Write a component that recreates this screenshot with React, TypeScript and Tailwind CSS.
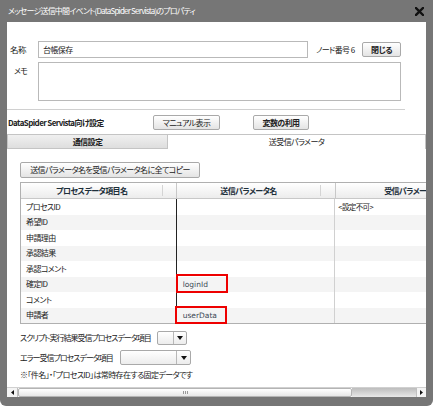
import React from "react";

function Btn({ w, children, bold }: { w: string; children: React.ReactNode; bold?: boolean }) {
  return (
    <div
      className={`${w} h-[15px] flex items-center justify-center rounded-[2px] border border-[#a9a9a9] bg-linear-to-b from-white to-[#e4e4e4] text-[#222] ${bold ? "font-bold" : ""}`}
    >
      {children}
    </div>
  );
}

function Select({ w, left }: { w: string; left: string }) {
  return (
    <div className={`${w} h-full flex rounded-[2px] border border-[#a9a9a9] bg-linear-to-b from-white to-[#ececec]`}>
      <div className={`${left} h-full border-r border-[#b8b8b8]`} />
      <div className="flex-1 flex items-center justify-center">
        <svg width="6" height="4" viewBox="0 0 6 4">
          <path d="M0 0 L6 0 L3 4 Z" fill="#111" />
        </svg>
      </div>
    </div>
  );
}

export default function App() {
  const rows = ["プロセスID", "希望ID", "申請理由", "承認結果", "承認コメント", "確定ID", "コメント", "申請者"];
  return (
    <div className="w-[433px] h-[406px] bg-[#767676] rounded-b-[6px] flex flex-col overflow-hidden whitespace-nowrap font-['Noto_Sans_CJK_JP',sans-serif] [font-feature-settings:'palt'] text-[8px] tracking-[-0.6px] leading-none text-[#222]">
      <div className="h-[22px] shrink-0 flex items-center justify-between pl-[8px] pr-[9px] text-white">
        <span className="pb-[1px] tracking-[-0.8px]">メッセージ送信中間イベント(DataSpider Servista)のプロパティ</span>
        <svg width="9" height="9" viewBox="0 0 9 9">
          <path d="M1 1 L8 8 M8 1 L1 8" stroke="#111" strokeWidth="2.4" strokeLinecap="square" />
        </svg>
      </div>
      <div className="mx-[7px] h-[375px] bg-white flex flex-col overflow-hidden">
        {/* name row */}
        <div className="mt-[19px] h-[17px] flex items-center shrink-0">
          <span className="pl-[3px] w-[31px] text-[8.5px]">名称</span>
          <div className="w-[270px] h-[17px] border border-[#b9b9b9] flex items-center px-[4px]">台帳保存</div>
          <span className="ml-[8px] w-[46px]">ノード番号 6</span>
          <Btn w="w-[39px]" bold>閉じる</Btn>
        </div>
        {/* memo row */}
        <div className="mt-[4px] flex shrink-0">
          <span className="pl-[7px] w-[31px] pt-[5px]">メモ</span>
          <div className="w-[363px] h-[39px] border border-[#b9b9b9]" />
        </div>
        <div className="mt-[8px] h-px w-[398px] bg-[#d0d0d0] shrink-0" />
        {/* settings row */}
        <div className="mt-[5px] h-[15px] flex items-center shrink-0">
          <span className="pl-[1px] w-[146px] font-bold">DataSpider Servista向け設定</span>
          <Btn w="w-[67px]">マニュアル表示</Btn>
          <div className="w-[33px]" />
          <Btn w="w-[56px]" bold>変数の利用</Btn>
        </div>
        {/* tabs */}
        <div className="mt-[4px] h-[15px] flex shrink-0">
          <div className="w-[161px] h-full flex items-center justify-center border border-[#c4c4c4] bg-linear-to-b from-[#f0f0f0] to-[#dedede] font-bold">
            通信設定
          </div>
          <div className="flex-1 h-full flex items-center justify-center border-t border-r border-[#c4c4c4]">
            送受信パラメータ
          </div>
        </div>
        {/* copy button */}
        <div className="mt-[13px] ml-[13px] w-[180px] h-[16px] shrink-0 flex items-center justify-center rounded-[2px] border border-[#a9a9a9] bg-linear-to-b from-white to-[#e4e4e4]">
          送信パラメータ名を受信パラメータ名に全てコピー
        </div>
        {/* table */}
        <div className="mt-[4px] ml-[13px] w-[470px] shrink-0 border border-[#b0b0b0]">
          <div className="h-[16px] flex border-b border-[#c8c8c8] bg-linear-to-b from-white to-[#ececec] font-bold text-[#1d2f3a]">
            <div className="w-[143px] flex items-center justify-center border-r border-[#d4d4d4] my-[2px]">プロセスデータ項目名</div>
            <div className="w-[14px] border-r border-[#c8c8c8]" />
            <div className="w-[144px] flex items-center justify-center border-r border-[#d4d4d4] my-[2px]">送信パラメータ名</div>
            <div className="w-[15px] border-r border-[#c8c8c8]" />
            <div className="w-[154px] flex items-center justify-center">受信パラメータ名</div>
          </div>
          {rows.map((r, i) => (
            <div key={r} className={`h-[15.5px] flex ${i % 2 === 1 ? "bg-[#f4f4f4]" : "bg-white"}`}>
              <div className="w-[156px] flex items-center pl-[5px] border-r border-[#222]">{r}</div>
              <div className="w-[159px] relative flex items-center pl-[6px] border-r border-[#d0d0d0] text-[#3b4855]">
                {i === 5 && (
                  <>
                    <div className="absolute left-[-1px] top-[-3px] w-[52px] h-[19px] border-2 border-[#ee0000]" />
                    <span className="font-['DejaVu_Sans',sans-serif] text-[7.5px] tracking-normal">loginId</span>
                  </>
                )}
                {i === 7 && (
                  <>
                    <div className="absolute left-[-2px] top-[-2px] w-[52px] h-[18px] border-2 border-[#ee0000]" />
                    <span className="font-['DejaVu_Sans',sans-serif] text-[7.5px] tracking-normal">userData</span>
                  </>
                )}
              </div>
              <div className="w-[154px] flex items-center pl-[3px] text-[7.5px]">{i === 0 ? "<設定不可>" : ""}</div>
            </div>
          ))}
        </div>
        {/* select rows */}
        <div className="mt-[7px] ml-[13px] h-[14px] flex items-center shrink-0">
          <span className="w-[137px] tracking-[-1px]">スクリプト実行結果受信プロセスデータ項目</span>
          <Select w="w-[30px]" left="w-[16px]" />
        </div>
        <div className="mt-[5px] ml-[13px] h-[15px] flex items-center shrink-0">
          <span className="w-[100px] tracking-[-1px]">エラー受信プロセスデータ項目</span>
          <Select w="w-[71px]" left="w-[56px]" />
        </div>
        <div className="mt-[6px] ml-[13px] shrink-0">※「件名」・「プロセスID」は常時存在する固定データです</div>
        <div className="flex-1" />
        {/* scrollbar */}
        <div className="h-[10px] flex shrink-0 border-t border-[#d0d0d0]">
          <div className="w-[11px] h-full flex items-center justify-center bg-[#f4f4f4] border-r border-[#c0c0c0]">
            <svg width="3" height="5" viewBox="0 0 3 5"><path d="M3 0 L0 2.5 L3 5 Z" fill="#111" /></svg>
          </div>
          <div className="w-[334px] h-full flex items-center justify-center rounded-[2px] border border-[#b4b4b4] bg-linear-to-b from-white to-[#e6e6e6]">
            <div className="flex gap-[1px]">
              <div className="w-px h-[3px] bg-[#999]" />
              <div className="w-px h-[3px] bg-[#999]" />
              <div className="w-px h-[3px] bg-[#999]" />
            </div>
          </div>
          <div className="w-[64px] h-full bg-linear-to-b from-[#bdbdbd] to-[#e8e8e8]" />
          <div className="flex-1 h-full flex items-center justify-center bg-[#f4f4f4] border-l border-[#c0c0c0]">
            <svg width="3" height="5" viewBox="0 0 3 5"><path d="M0 0 L3 2.5 L0 5 Z" fill="#111" /></svg>
          </div>
        </div>
      </div>
    </div>
  );
}
